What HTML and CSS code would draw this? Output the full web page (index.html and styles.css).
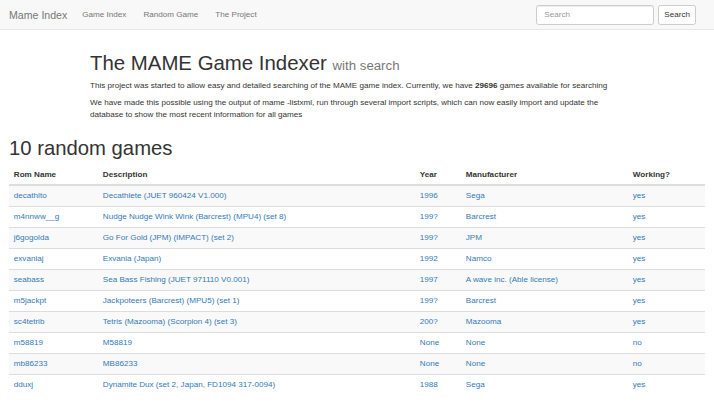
FILE: index.html
```html
<!DOCTYPE html>
<html>
<head>
<meta charset="utf-8">
<title>Mame Index</title>
<link rel="stylesheet" href="styles.css">
</head>
<body>
<nav class="navbar">
  <a class="brand" href="#">Mame Index</a>
  <ul class="nav">
    <li><a href="#">Game Index</a></li>
    <li><a href="#">Random Game</a></li>
    <li><a href="#">The Project</a></li>
  </ul>
  <form class="search">
    <input type="text" placeholder="Search">
    <button type="button">Search</button>
  </form>
</nav>
<section class="jumbo">
  <h1>The MAME Game Indexer <small>with search</small></h1>
  <p>This project was started to allow easy and detailed searching of the MAME game index. Currently, we have <b>29696</b> games available for searching</p>
  <p>We have made this possible using the output of mame -listxml, run through several import scripts, which can now easily import and update the database to show the most recent information for all games</p>
</section>
<main class="content">
  <h2>10 random games</h2>
  <table class="games">
    <thead>
      <tr><th class="c-rom">Rom Name</th><th class="c-desc">Description</th><th class="c-year">Year</th><th class="c-man">Manufacturer</th><th class="c-work">Working?</th></tr>
    </thead>
    <tbody>
      <tr><td><a href="#">decathlto</a></td><td><a href="#">Decathlete (JUET 960424 V1.000)</a></td><td><a href="#">1996</a></td><td><a href="#">Sega</a></td><td><a href="#">yes</a></td></tr>
      <tr><td><a href="#">m4nnww__g</a></td><td><a href="#">Nudge Nudge Wink Wink (Barcrest) (MPU4) (set 8)</a></td><td><a href="#">199?</a></td><td><a href="#">Barcrest</a></td><td><a href="#">yes</a></td></tr>
      <tr><td><a href="#">j6gogolda</a></td><td><a href="#">Go For Gold (JPM) (IMPACT) (set 2)</a></td><td><a href="#">199?</a></td><td><a href="#">JPM</a></td><td><a href="#">yes</a></td></tr>
      <tr><td><a href="#">exvaniaj</a></td><td><a href="#">Exvania (Japan)</a></td><td><a href="#">1992</a></td><td><a href="#">Namco</a></td><td><a href="#">yes</a></td></tr>
      <tr><td><a href="#">seabass</a></td><td><a href="#">Sea Bass Fishing (JUET 971110 V0.001)</a></td><td><a href="#">1997</a></td><td><a href="#">A wave inc. (Able license)</a></td><td><a href="#">yes</a></td></tr>
      <tr><td><a href="#">m5jackpt</a></td><td><a href="#">Jackpoteers (Barcrest) (MPU5) (set 1)</a></td><td><a href="#">199?</a></td><td><a href="#">Barcrest</a></td><td><a href="#">yes</a></td></tr>
      <tr><td><a href="#">sc4tetrib</a></td><td><a href="#">Tetris (Mazooma) (Scorpion 4) (set 3)</a></td><td><a href="#">200?</a></td><td><a href="#">Mazooma</a></td><td><a href="#">yes</a></td></tr>
      <tr><td><a href="#">m58819</a></td><td><a href="#">M58819</a></td><td><a href="#">None</a></td><td><a href="#">None</a></td><td><a href="#">no</a></td></tr>
      <tr><td><a href="#">mb86233</a></td><td><a href="#">MB86233</a></td><td><a href="#">None</a></td><td><a href="#">None</a></td><td><a href="#">no</a></td></tr>
      <tr><td><a href="#">dduxj</a></td><td><a href="#">Dynamite Dux (set 2, Japan, FD1094 317-0094)</a></td><td><a href="#">1988</a></td><td><a href="#">Sega</a></td><td><a href="#">yes</a></td></tr>
    </tbody>
  </table>
</main>
</body>
</html>
```
FILE: styles.css
```css
* { box-sizing: border-box; }
html, body { margin: 0; padding: 0; }
body {
  font-family: "Liberation Sans", Arial, sans-serif;
  font-size: 8.1px;
  line-height: 12px;
  color: #333;
  background: #fff;
}
a { color: #337ab7; text-decoration: none; }

.navbar {
  height: 30px;
  background: #f8f8f8;
  border-bottom: 1px solid #e7e7e7;
  display: flex;
  align-items: center;
  padding: 0 18px 0 9px;
}
.brand {
  color: #777;
  font-size: 10.6px;
  margin-right: 15px;
}
.nav {
  list-style: none;
  margin: 0;
  padding: 0;
  display: flex;
  gap: 17px;
}
.nav a { color: #777; }
.search {
  margin-left: auto;
  display: flex;
  gap: 4px;
}
.search input {
  width: 118px;
  height: 20px;
  border: 1px solid #ccc;
  border-radius: 2.5px;
  padding: 0 7px;
  font: inherit;
  font-size: 8.1px;
  color: #555;
  background: #fff;
  box-shadow: inset 0 1px 1px rgba(0,0,0,.075);
}
.search input::placeholder { color: #999; }
.search button {
  height: 20px;
  border: 1px solid #ccc;
  border-radius: 2.5px;
  background: #fff;
  color: #333;
  font: inherit;
  font-size: 8.1px;
  padding: 0 5px;
}

.jumbo {
  padding: 18px 0 0 90px;
  margin-right: 90px;
}
.jumbo h1 {
  font-size: 20.4px;
  font-weight: 500;
  line-height: 24px;
  margin: 3px 0 2px;
  font-family: "Liberation Sans", Arial, sans-serif;
}
.jumbo h1 small {
  font-size: 65%;
  color: #777;
  font-weight: 400;
}
.jumbo p { margin: 0 0 5px; }

.content { padding: 0 9px; }
.content h2 {
  font-size: 20.3px;
  font-weight: 500;
  line-height: 24px;
  margin: 15px 0 5px;
}
.games {
  width: 100%;
  border-collapse: collapse;
  border-spacing: 0;
}
.games th, .games td {
  text-align: left;
  padding: 5px 4.8px;
  line-height: 10px;
  vertical-align: top;
}
.games th {
  font-weight: bold;
  border-bottom: 2px solid #ddd;
  padding-bottom: 4px;
}
.games td { border-top: 1px solid #ddd; }
.games tbody tr:first-child td { border-top: 0; }
.games tbody tr:nth-child(odd) { background: #f9f9f9; }
.c-rom { width: 89px; }
.c-desc { width: 317px; }
.c-year { width: 46px; }
.c-man { width: 167px; }
```
